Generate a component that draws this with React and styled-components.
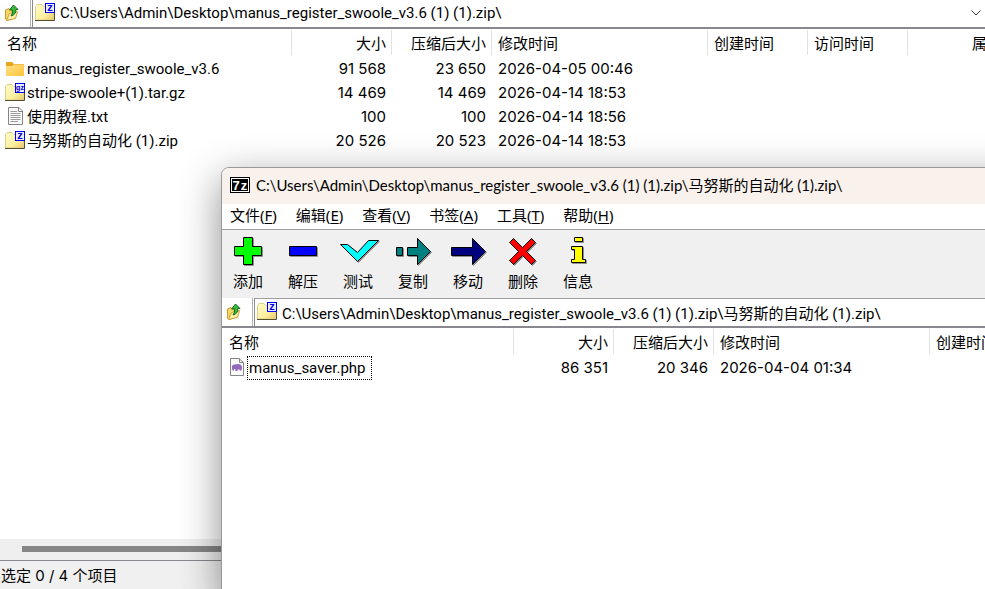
import React, { useState } from 'react'
import styled, { createGlobalStyle } from 'styled-components'


const outerPath = 'C:\\Users\\Admin\\Desktop\\manus_register_swoole_v3.6 (1) (1).zip\\'
const innerPath = outerPath + '马努斯的自动化 (1).zip\\'

const outerFiles = [
    { icon: 'folder', name: 'manus_register_swoole_v3.6', size: '91 568', packed: '23 650', modified: '2026-04-05 00:46' },
    { icon: 'gz', name: 'stripe-swoole+(1).tar.gz', size: '14 469', packed: '14 469', modified: '2026-04-14 18:53' },
    { icon: 'text', name: '使用教程.txt', size: '100', packed: '100', modified: '2026-04-14 18:56' },
    { icon: 'z', name: '马努斯的自动化 (1).zip', size: '20 526', packed: '20 523', modified: '2026-04-14 18:53' },
]

const innerFiles = [
    { icon: 'php', name: 'manus_saver.php', size: '86 351', packed: '20 346', modified: '2026-04-04 01:34', focused: true },
]

const menus = [
    ['文件', 'F'],
    ['编辑', 'E'],
    ['查看', 'V'],
    ['书签', 'A'],
    ['工具', 'T'],
    ['帮助', 'H'],
]

const tools = [
    { label: '添加', color: '#00ff00', shapes: ['17.5,1.5 26.5,1.5 26.5,10.5 35.5,10.5 35.5,19.5 26.5,19.5 26.5,28.5 17.5,28.5 17.5,19.5 8.5,19.5 8.5,10.5 17.5,10.5'] },
    { label: '解压', color: '#0000ff', shapes: ['8.5,10.5 35.5,10.5 35.5,19.5 8.5,19.5'] },
    { label: '测试', color: '#00ffff', shapes: ['4.5,8.5 11.5,8.5 21.5,16.5 32.5,4.5 42.5,4.5 21.5,25.5'] },
    { label: '复制', color: '#008080', shapes: ['5.5,11.5 11.5,11.5 11.5,19.5 5.5,19.5', '16.5,11.5 26.5,11.5 26.5,2.5 39.5,15.5 26.5,28.5 26.5,19.5 16.5,19.5'] },
    { label: '移动', color: '#000080', shapes: ['5.5,11.5 26.5,11.5 26.5,2.5 39.5,15.5 26.5,28.5 26.5,19.5 5.5,19.5'] },
    { label: '删除', color: '#ff0000', shapes: ['8.5,6.5 12.5,2.5 21.5,11.5 30.5,2.5 34.5,6.5 25.5,15.5 34.5,24.5 30.5,28.5 21.5,19.5 12.5,28.5 8.5,24.5 17.5,15.5'] },
    { label: '信息', color: '#ffff00', shapes: ['18.5,1.5 26.5,1.5 26.5,5.5 18.5,5.5', '15.5,10.5 26.5,10.5 26.5,23.5 29.5,23.5 29.5,26.5 15.5,26.5 15.5,23.5 18.5,23.5 18.5,13.5 15.5,13.5'] },
]


const ArchiveIcon = ({ letter }) => (
    <svg width="20" height="20" viewBox="0 0 20 20" aria-hidden="true">
        <defs>
            <linearGradient id="archive" x1="0" y1="0" x2="1" y2="1">
                <stop offset="0" stopColor="#fffbc8" />
                <stop offset="0.6" stopColor="#fbf0a0" />
                <stop offset="1" stopColor="#eac468" />
            </linearGradient>
        </defs>
        <path d="M0.5 3.5 L2 1.5 H7 L8.5 3.5 H19 V17 H0.5 Z" fill="url(#archive)" stroke="#dcd08a" />
        <path d="M0 17.5 H19.5 V10" fill="none" stroke="#55502c" />
        <rect x="10.5" y="0.5" width="9" height="9" fill="#ececff" stroke="#0000ff" />
        <text x="15" y={letter === 'z' ? 8 : 7} textAnchor="middle" fontFamily="Liberation Sans" fontWeight="bold" fontSize={letter === 'z' ? 11 : 7} fill="#0000e0">
            {letter}
        </text>
    </svg>
)

const FolderIcon = () => (
    <svg width="20" height="18" viewBox="0 0 20 18" aria-hidden="true">
        <defs>
            <linearGradient id="folder" x1="0" y1="0" x2="1" y2="1">
                <stop offset="0" stopColor="#ffe08a" />
                <stop offset="1" stopColor="#ffc538" />
            </linearGradient>
        </defs>
        <path d="M1 3 Q1 2 2 2 H7 L9 4 H18 Q19 4 19 5 V8 H1 Z" fill="#e8a41c" />
        <path d="M1 6 H7 L9 4.5 H18 Q19 4.5 19 5.5 V15 Q19 16 18 16 H2 Q1 16 1 15 Z" fill="url(#folder)" />
    </svg>
)

const TextIcon = () => (
    <svg width="20" height="20" viewBox="0 0 20 20" aria-hidden="true">
        <path d="M3.5 0.5 H14 L17.5 4 V17.5 H3.5 Z" fill="#fafafa" stroke="#858585" />
        <path d="M13.5 0.5 V4.5 H17.5" fill="none" stroke="#858585" />
        <path d="M5.5 4.5 H12 M5.5 6.5 H15.5 M5.5 8.5 H15.5 M5.5 10.5 H15.5 M5.5 12.5 H15.5 M5.5 14.5 H13" stroke="#9c9c9c" />
    </svg>
)

const PhpIcon = () => (
    <svg width="20" height="20" viewBox="0 0 20 20" aria-hidden="true">
        <path d="M3.5 0.5 H12 L16.5 4.5 V17.5 H3.5 Z" fill="#fafafa" stroke="#858585" />
        <path d="M12.5 0.5 V4.5 H16.5" fill="none" stroke="#858585" />
        <path d="M5 8 Q6 6 8 6.5 Q12 5.5 14 7 Q15 8 15 10 L14.5 12.5 H12.5 V11.5 H10.5 V13 H8.5 V11.5 L7 11 V12.5 H5.5 Q4.5 10 5 8 Z" fill="#9468b8" />
    </svg>
)

const UpIcon = () => (
    <svg width="16" height="18" viewBox="0 0 16 18" aria-hidden="true">
        <path d="M1.5 6 L5 4.5 L6.5 6 L11 5 V14 L3 16.5 L1.5 15 Z" fill="#f8d766" stroke="#c79a2c" />
        <path d="M2.5 16.5 L5.5 9.5 L13.5 7.5 L11.5 14.5 Z" fill="#fff2a8" stroke="#d0a036" />
        <path d="M9.5 1 L14 5.5 H11.8 Q12.3 10.5 7 12 Q9.2 9.5 8.4 6 H5.5 Z" fill="#38b838" stroke="#146c1c" />
    </svg>
)

const AppIcon = () => (
    <svg width="20" height="16" viewBox="0 0 20 16" aria-hidden="true">
        <rect x="0.5" y="0.5" width="19" height="15" fill="#fff" stroke="#000" />
        <rect x="2" y="2" width="16" height="12" fill="#000" />
        <text x="6" y="13" textAnchor="middle" fontFamily="Liberation Sans" fontWeight="bold" fontSize="13" fill="#fff">7</text>
        <text x="14" y="13" textAnchor="middle" fontFamily="Liberation Sans" fontWeight="bold" fontSize="13" fill="#fff">z</text>
    </svg>
)

const fileIcons = {
    folder: <FolderIcon />,
    gz: <ArchiveIcon letter="gz" />,
    text: <TextIcon />,
    z: <ArchiveIcon letter="z" />,
    php: <PhpIcon />,
}

const ToolIcon = ({ color, shapes }) => (
    <svg width="44" height="32" viewBox="0 0 44 32" aria-hidden="true">
        {shapes.map(points => (
            <polygon key={points} points={points} transform="translate(1 1)" fill="#909090" stroke="#909090" />
        ))}
        {shapes.map(points => (
            <polygon key={points} points={points} fill={color} stroke="#000" />
        ))}
    </svg>
)

const AddressBar = ({ path }) => {
    const [value, setValue] = useState(path)
    return (
        <AddressRow>
            <UpButton aria-label="向上"><UpIcon /></UpButton>
            <AddressBox>
                <ArchiveIcon letter="z" />
                <AddressInput aria-label="路径" spellCheck="false" value={value} onChange={e => setValue(e.target.value)} />
                <DropButton aria-label="展开">
                    <svg width="10" height="6" viewBox="0 0 10 6" aria-hidden="true">
                        <path d="M0.5 0.5 L5 5 L9.5 0.5" fill="none" stroke="#444" />
                    </svg>
                </DropButton>
            </AddressBox>
        </AddressRow>
    )
}

const FileTable = ({ files }) => (
    <TableWrapper>
        <Table>
            <thead>
                <tr>
                    <HeadCell $width={292}>名称</HeadCell>
                    <HeadCell $width={100} $right>大小</HeadCell>
                    <HeadCell $width={100} $right>压缩后大小</HeadCell>
                    <HeadCell $width={216}>修改时间</HeadCell>
                    <HeadCell $width={100}>创建时间</HeadCell>
                    <HeadCell $width={100}>访问时间</HeadCell>
                    <HeadCell $width={100} $right>属性</HeadCell>
                </tr>
            </thead>
            <tbody>
                {files.map(file => (
                    <tr key={file.name}>
                        <NameCell>
                            <FileLabel>
                                {fileIcons[file.icon]}
                                <FileName $focused={file.focused}>{file.name}</FileName>
                            </FileLabel>
                        </NameCell>
                        <Cell $right>{file.size}</Cell>
                        <Cell $right>{file.packed}</Cell>
                        <Cell>{file.modified}</Cell>
                        <Cell />
                        <Cell />
                        <Cell />
                    </tr>
                ))}
            </tbody>
        </Table>
    </TableWrapper>
)

export default function App() {
    return (
        <>
            <GlobalStyle />
            <Desktop>
                <BackWindow>
                    <AddressBar path={outerPath} />
                    <FileTable files={outerFiles} />
                    <ScrollTrack>
                        <ScrollThumb />
                    </ScrollTrack>
                    <StatusBar>选定 0 / 4 个项目</StatusBar>
                </BackWindow>
                <FrontWindow>
                    <TitleBar>
                        <AppIcon />
                        <Title>{innerPath}</Title>
                    </TitleBar>
                    <MenuBar>
                        {menus.map(([label, hotkey]) => (
                            <MenuButton key={hotkey}>{label}(<u>{hotkey}</u>)</MenuButton>
                        ))}
                    </MenuBar>
                    <ToolBar>
                        {tools.map(tool => (
                            <ToolButton key={tool.label}>
                                <ToolIcon color={tool.color} shapes={tool.shapes} />
                                {tool.label}
                            </ToolButton>
                        ))}
                    </ToolBar>
                    <AddressBar path={innerPath} />
                    <FileTable files={innerFiles} />
                </FrontWindow>
            </Desktop>
        </>
    )
}


const GlobalStyle = createGlobalStyle`
    * {
        box-sizing: border-box;
    }
    body {
        margin: 0;
        color: #000;
        font-family: Inter, 'Noto Sans CJK SC', sans-serif;
        font-size: 15px;
        line-height: 20px;
    }
    button, input {
        margin: 0;
        padding: 0;
        border: 0;
        background: none;
        color: inherit;
        font: inherit;
    }
    svg {
        display: block;
        flex: none;
    }
`

const Desktop = styled.main`
    position: relative;
    height: 100vh;
    overflow: hidden;
`

// the top edge of the address box is just off the screen
const BackWindow = styled.section`
    display: flex;
    flex-direction: column;
    height: calc(100% + 1px);
    margin-top: -1px;
    background: #fff;
`

const FrontWindow = styled.section`
    position: absolute;
    top: 167px;
    left: 221px;
    right: -48px;
    bottom: -8px;
    display: flex;
    flex-direction: column;
    overflow: hidden;
    background: #fff;
    border: 1px solid #99999c;
    border-radius: 8px;
    box-shadow: 0 12px 40px rgba(0, 0, 0, .45);
`

const AddressRow = styled.div`
    display: flex;
    flex: none;
    height: 30px;
    background: #fff;
    border-bottom: 2px solid #88888e;
`

const UpButton = styled.button`
    display: flex;
    align-items: center;
    justify-content: center;
    width: 31px;
    padding-right: 6px;
    border-right: 1px solid #b4b4b4;
`

const AddressBox = styled.div`
    display: flex;
    flex: 1;
    align-items: center;
    gap: 5px;
    margin-left: 1px;
    padding: 0 0 1px 2px;
    border-left: 1px solid #88888e;
    border-top: 1px solid #a0a0a4;
`

const AddressInput = styled.input`
    flex: 1;
    min-width: 0;
    height: 24px;
    outline: none;
    font-family: Roboto, 'Noto Sans CJK SC', sans-serif;
`

const DropButton = styled.button`
    width: 14px;
`

const TableWrapper = styled.div`
    flex: 1;
    overflow: hidden;
`

const Table = styled.table`
    width: 1008px;
    table-layout: fixed;
    border-collapse: collapse;
`

const HeadCell = styled.th`
    width: ${props => props.$width}px;
    height: 28px;
    padding: 2px 6px 0;
    background: linear-gradient(#e2e2e2, #e2e2e2) right 1px / 1px 25px no-repeat;
    font-weight: 400;
    text-align: ${props => (props.$right ? 'right' : 'left')};
    white-space: nowrap;

    &:first-child {
        padding-left: 7px;
    }
`

const Cell = styled.td`
    height: 24px;
    padding: 0 6px;
    text-align: ${props => (props.$right ? 'right' : 'left')};
    white-space: nowrap;
`

const NameCell = styled(Cell)`
    padding: 0 0 0 5px;
`

const FileLabel = styled.div`
    display: flex;
    align-items: center;
`

const FileName = styled.span`
    height: 24px;
    padding: 0 6px 0 2px;
    font-family: Roboto, 'Noto Sans CJK SC', sans-serif;
    line-height: 24px;
    outline: ${props => (props.$focused ? '1px dotted #000' : 'none')};
    outline-offset: -1px;
`

const ScrollTrack = styled.div`
    flex: none;
    height: 21px;
    padding: 7px 0 8px 22px;
    background: #efefef;
`

const ScrollThumb = styled.div`
    height: 6px;
    background: #868686;
`

const StatusBar = styled.footer`
    flex: none;
    height: 29px;
    padding: 5px 1px;
    background: #f0f0f0;
    border-top: 1px solid #88888e;
`

const TitleBar = styled.header`
    display: flex;
    flex: none;
    align-items: center;
    gap: 6px;
    height: 36px;
    padding: 0 0 2px 8px;
    background: #f9f1ec;
`

const Title = styled.h1`
    margin: 0;
    font-family: Lato, 'Noto Sans CJK SC', sans-serif;
    font-size: 15px;
    font-weight: 400;
    white-space: nowrap;
`

const MenuBar = styled.nav`
    display: flex;
    flex: none;
    gap: 3px;
    height: 26px;
    border-bottom: 1px solid #a0a0a0;
`

const MenuButton = styled.button`
    padding: 0 8px 3px;
    font-family: 'Noto Sans', 'Noto Sans CJK SC', sans-serif;

    u {
        text-underline-offset: 2px;
    }
`

const ToolBar = styled.div`
    display: flex;
    flex: none;
    gap: 3px;
    height: 68px;
    padding-top: 6px;
    background: #f0f0f0;
`

const ToolButton = styled.button`
    display: flex;
    flex-direction: column;
    align-items: center;
    gap: 4px;
    width: 52px;
`
